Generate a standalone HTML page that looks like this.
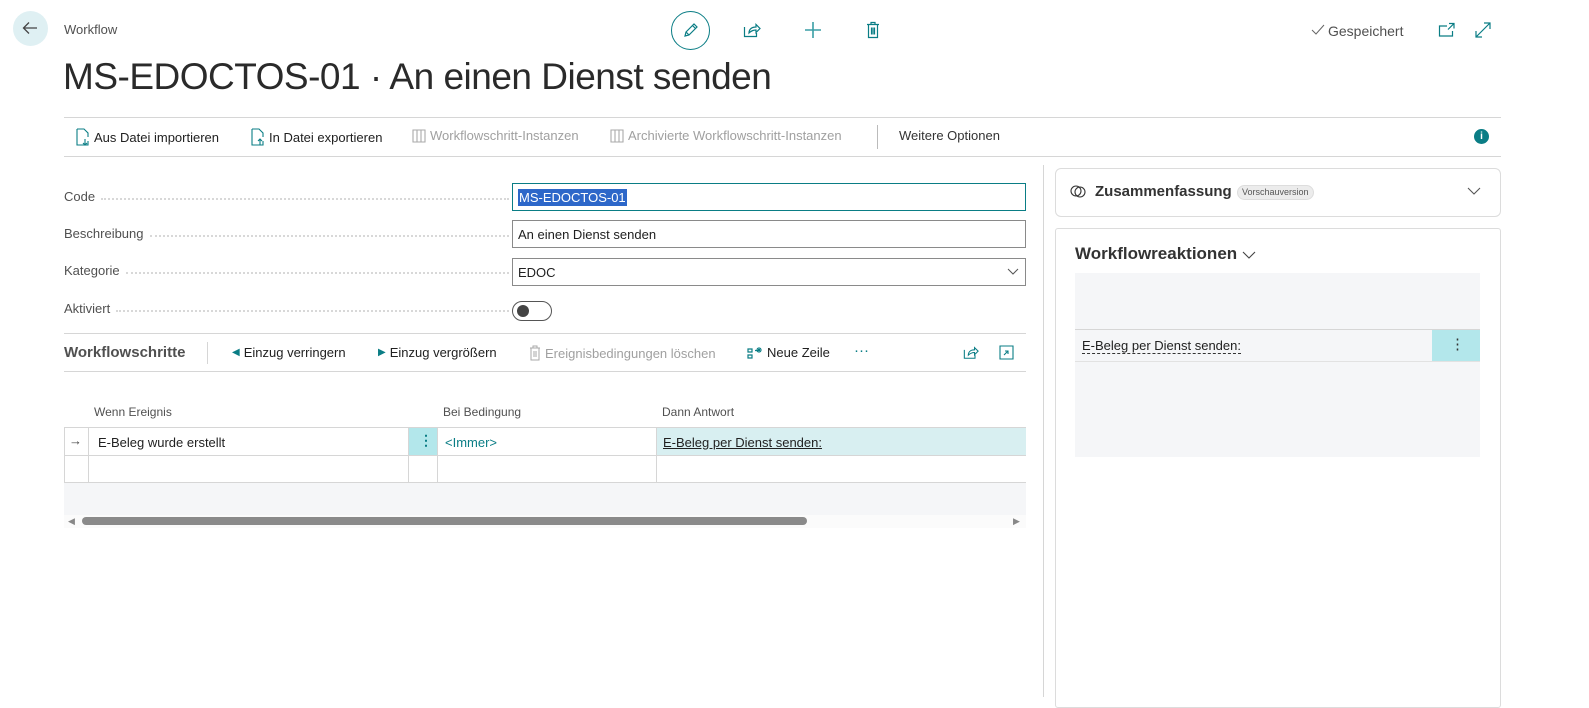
<!DOCTYPE html>
<html><head><meta charset="utf-8"><style>
*{box-sizing:border-box;margin:0;padding:0}
body{width:1589px;height:697px;background:#fff;font-family:"Liberation Sans",sans-serif;color:#212121;position:relative;overflow:hidden;font-size:13px}
.a{position:absolute;white-space:nowrap}
.ln{position:absolute;background:#d6d6d6}
.lbl{position:absolute;left:64px;width:445px;color:#505050;font-size:13px;display:flex;align-items:center}
.lbl span{flex:0 0 auto;padding-right:6px}
.lbl i{flex:1;border-bottom:2px dotted #d8d8d8;margin-top:4px;margin-right:0}
.inp{position:absolute;left:512px;width:514px;height:28px;border:1px solid #8a8a8a;padding:0 5px;display:flex;align-items:center;font-size:13px}
.tb{position:absolute;top:128px;font-size:13px;display:flex;align-items:center;gap:4px}
.dis{color:#a0a0a0}
.teal{color:#0a7d85}
</style></head><body>
<div class="a" style="left:13px;top:11px;width:35px;height:35px;border-radius:50%;background:#dff0f3"></div>
<svg class="a" style="left:21px;top:19px" width="18" height="18" viewBox="0 0 18 18"><path d="M16 9H3M8 3.5L2.5 9 8 14.5" fill="none" stroke="#444" stroke-width="1.3"/></svg>
<div class="a" style="left:64px;top:22px;font-size:13px;color:#505050">Workflow</div>
<div class="a" style="left:671px;top:11px;width:39px;height:39px;border-radius:50%;border:1.3px solid #0a7d85"></div>
<svg class="a" style="left:681px;top:21px" width="19" height="19" viewBox="0 0 19 19"><path d="M4 15l1-4 8-8 3 3-8 8-4 1zM11.5 4.5l3 3M5 11l3 3" fill="none" stroke="#0a7d85" stroke-width="1.2"/></svg>
<svg class="a" style="left:743px;top:22px" width="18" height="16" viewBox="0 0 18 16"><path d="M1.5 5v9.5h12V11M6 11c0-4 3-6 7-6V2.5l4 4-4 4V8c-3 0-5 1-7 3z" fill="none" stroke="#0a7d85" stroke-width="1.2"/></svg>
<svg class="a" style="left:804px;top:21px" width="18" height="18" viewBox="0 0 18 18"><path d="M9 1v16M1 9h16" stroke="#3a9ea5" stroke-width="1.6"/></svg>
<svg class="a" style="left:866px;top:21px" width="14" height="18" viewBox="0 0 14 18"><path d="M1 3.5h12M5 3.5V1.5h4v2M2.5 3.5v13h9v-13M5.5 6.5v7M7 6.5v7M8.5 6.5v7" fill="none" stroke="#0a7d85" stroke-width="1.2"/></svg>
<svg class="a" style="left:1311px;top:24px" width="14" height="12" viewBox="0 0 14 12"><path d="M1 6l4 4 8-9" fill="none" stroke="#666" stroke-width="1"/></svg>
<div class="a" style="left:1328px;top:23px;font-size:14px;color:#505050">Gespeichert</div>
<svg class="a" style="left:1438px;top:22px" width="18" height="16" viewBox="0 0 18 16"><path d="M9 4H1.5v10h13V9M11 1.5h5v5M16 1.5L10 7.5" fill="none" stroke="#0a7d85" stroke-width="1.2"/></svg>
<svg class="a" style="left:1474px;top:21px" width="18" height="18" viewBox="0 0 18 18"><path d="M2 16L16 2M10 2h6v6M2 10v6h6" fill="none" stroke="#0a7d85" stroke-width="1.2"/></svg>
<div class="a" style="left:63px;top:56px;font-size:37px;font-weight:300;color:#2a2a2a;letter-spacing:-.5px">MS-EDOCTOS-01 · An einen Dienst senden</div>
<div class="ln" style="left:64px;top:117px;width:1437px;height:1px"></div>
<div class="tb" style="left:76px"><svg width="14" height="18" viewBox="0 0 14 18"><path d="M1 1h7l4 4v4M12 13v4H1V1" fill="none" stroke="#0a7d85" stroke-width="1.1"/><path d="M9 11v6M7 15l2 2 2-2" fill="none" stroke="#0a7d85" stroke-width="1.1"/></svg>Aus Datei importieren</div>
<div class="tb" style="left:251px"><svg width="14" height="18" viewBox="0 0 14 18"><path d="M1 1h7l4 4v4M12 13v4H1V1" fill="none" stroke="#0a7d85" stroke-width="1.1"/><path d="M9 17v-6M7 13l2-2 2 2" fill="none" stroke="#0a7d85" stroke-width="1.1"/></svg>In Datei exportieren</div>
<div class="tb dis" style="left:412px"><svg width="14" height="14" viewBox="0 0 14 14"><path d="M1 1h12v12H1zM5 1v12M9 1v12" fill="none" stroke="#aaa" stroke-width="1.1"/></svg>Workflowschritt-Instanzen</div>
<div class="tb dis" style="left:610px"><svg width="14" height="14" viewBox="0 0 14 14"><path d="M1 1h12v12H1zM5 1v12M9 1v12" fill="none" stroke="#aaa" stroke-width="1.1"/></svg>Archivierte Workflowschritt-Instanzen</div>
<div class="ln" style="left:877px;top:125px;width:1px;height:24px;background:#bbb"></div>
<div class="tb" style="left:899px;color:#333">Weitere Optionen</div>
<div class="a" style="left:1474px;top:129px;width:15px;height:15px;border-radius:50%;background:#0a7d85;color:#fff;font-size:10px;text-align:center;line-height:15px;font-weight:bold">i</div>
<div class="ln" style="left:64px;top:156px;width:1437px;height:1px"></div>
<div class="ln" style="left:1043px;top:165px;width:1px;height:532px"></div>
<div class="lbl" style="top:189px"><span>Code</span><i></i></div>
<div class="inp" style="top:183px;border-color:#0a7d85"><span style="background:#2d67c9;color:#fff;padding:1px 1px">MS-EDOCTOS-01</span></div>
<div class="lbl" style="top:226px"><span>Beschreibung</span><i></i></div>
<div class="inp" style="top:220px">An einen Dienst senden</div>
<div class="lbl" style="top:263px"><span>Kategorie</span><i></i></div>
<div class="inp" style="top:258px">EDOC<svg style="position:absolute;right:6px;top:9px" width="12" height="8" viewBox="0 0 12 8"><path d="M1 1l5 5 5-5" fill="none" stroke="#555" stroke-width="1"/></svg></div>
<div class="lbl" style="top:301px"><span>Aktiviert</span><i></i></div>
<div class="a" style="left:512px;top:301px;width:40px;height:20px;border-radius:10px;border:1px solid #555"></div>
<div class="a" style="left:517px;top:305px;width:12px;height:12px;border-radius:50%;background:#444"></div>
<div class="ln" style="left:64px;top:333px;width:962px;height:1px"></div>
<div class="a" style="left:64px;top:344px;font-size:15px;font-weight:bold;color:#505050">Workflowschritte</div>
<div class="ln" style="left:207px;top:342px;width:1px;height:22px"></div>
<div class="tb" style="top:345px;left:232px"><span class="teal" style="font-size:10px">◀</span> Einzug verringern</div>
<div class="tb" style="top:345px;left:378px"><span class="teal" style="font-size:10px">▶</span> Einzug vergrößern</div>
<div class="tb dis" style="top:345px;left:529px"><svg width="12" height="16" viewBox="0 0 12 16"><path d="M1 3h10M4 3V1h4v2M2 3v12h8V3M5 6v6M7 6v6" fill="none" stroke="#aaa" stroke-width="1"/></svg> Ereignisbedingungen löschen</div>
<div class="tb" style="top:345px;left:747px"><svg width="16" height="14" viewBox="0 0 16 14"><path d="M1 3h4v3H1zM1 9h4v3H1zM8 4.5h3" fill="none" stroke="#0a7d85" stroke-width="1.2"/><path d="M12 1v6M9 4h6M10 2l4 4M14 2l-4 4" stroke="#0a7d85" stroke-width="1"/></svg> Neue Zeile</div>
<div class="a teal" style="left:854px;top:342px;font-size:15px">···</div>
<svg class="a" style="left:963px;top:345px" width="16" height="15" viewBox="0 0 18 16"><path d="M1.5 5v9.5h12V11M6 11c0-4 3-6 7-6V2.5l4 4-4 4V8c-3 0-5 1-7 3z" fill="none" stroke="#0a7d85" stroke-width="1.2"/></svg>
<svg class="a" style="left:999px;top:345px" width="15" height="15" viewBox="0 0 15 15"><path d="M1 1h13v13H1zM5 10l4-4M6 6h3v3" fill="none" stroke="#0a7d85" stroke-width="1.1"/></svg>
<div class="ln" style="left:64px;top:371px;width:962px;height:1px"></div>
<div class="a" style="left:94px;top:405px;font-size:12px;color:#505050">Wenn Ereignis</div>
<div class="a" style="left:443px;top:405px;font-size:12px;color:#505050">Bei Bedingung</div>
<div class="a" style="left:662px;top:405px;font-size:12px;color:#505050">Dann Antwort</div>
<div class="a" style="left:64px;top:427px;width:962px;height:56px;border-top:1px solid #d6d6d6;border-bottom:1px solid #d6d6d6;border-left:1px solid #d6d6d6"></div>
<div class="ln" style="left:64px;top:455px;width:962px;height:1px"></div>
<div class="a" style="left:408px;top:428px;width:29px;height:27px;background:#b3e7eb"></div>
<div class="a" style="left:656px;top:428px;width:370px;height:27px;background:#d8eff1"></div>
<div class="ln" style="left:88px;top:428px;width:1px;height:55px"></div>
<div class="ln" style="left:408px;top:428px;width:1px;height:55px"></div>
<div class="ln" style="left:437px;top:428px;width:1px;height:55px"></div>
<div class="ln" style="left:656px;top:428px;width:1px;height:55px"></div>
<div class="a" style="left:69px;top:433px;font-size:13px;color:#444">→</div>
<div class="a" style="left:98px;top:435px">E-Beleg wurde erstellt</div>
<div class="a teal" style="left:419px;top:432px;font-size:14px;font-weight:bold">⋮</div>
<div class="a teal" style="left:445px;top:435px">&lt;Immer&gt;</div>
<div class="a" style="left:663px;top:435px;text-decoration:underline">E-Beleg per Dienst senden:</div>
<div class="a" style="left:64px;top:483px;width:962px;height:32px;background:#f5f6f8"></div>
<div class="a" style="left:64px;top:515px;width:962px;height:13px;background:#fbfbfb"></div>
<div class="a" style="left:82px;top:517px;width:725px;height:8px;border-radius:4px;background:#8a8a8a"></div>
<div class="a" style="left:68px;top:516px;font-size:9px;color:#888">◀</div>
<div class="a" style="left:1013px;top:516px;font-size:9px;color:#888">▶</div>
<div class="a" style="left:1055px;top:168px;width:446px;height:49px;border:1px solid #dcdcdc;border-radius:6px"></div>
<svg class="a" style="left:1070px;top:184px" width="16" height="15" viewBox="0 0 16 15"><circle cx="6" cy="7" r="5" fill="none" stroke="#333" stroke-width="1.1"/><circle cx="10" cy="8" r="5" fill="none" stroke="#333" stroke-width="1.1"/></svg>
<div class="a" style="left:1095px;top:183px;font-size:15px;font-weight:bold;color:#333">Zusammenfassung</div>
<div class="a" style="left:1237px;top:185px;height:15px;padding:0 4px;border-radius:8px;background:#ececec;border:1px solid #ddd;font-size:9px;color:#555;line-height:13px">Vorschauversion</div>
<svg class="a" style="left:1467px;top:187px" width="14" height="9" viewBox="0 0 14 9"><path d="M1 1l6 6 6-6" fill="none" stroke="#555" stroke-width="1.1"/></svg>
<div class="a" style="left:1055px;top:228px;width:446px;height:480px;border:1px solid #dcdcdc;border-radius:3px"></div>
<div class="a" style="left:1075px;top:244px;font-size:17px;font-weight:bold;color:#333">Workflowreaktionen</div>
<svg class="a" style="left:1242px;top:251px" width="14" height="9" viewBox="0 0 14 9"><path d="M1 1l6 6 6-6" fill="none" stroke="#444" stroke-width="1.1"/></svg>
<div class="a" style="left:1075px;top:273px;width:405px;height:184px;background:#f5f6f8"></div>
<div class="ln" style="left:1075px;top:329px;width:405px;height:1px"></div>
<div class="ln" style="left:1075px;top:361px;width:405px;height:1px;background:#e2e2e2"></div>
<div class="a" style="left:1432px;top:330px;width:48px;height:31px;background:#b3e7eb"></div>
<div class="a" style="left:1450px;top:335px;font-size:15px;color:#333">⋮</div>
<div class="a" style="left:1082px;top:339px;border-bottom:1px dashed #333;line-height:14px">E-Beleg per Dienst senden:</div>
</body></html>
